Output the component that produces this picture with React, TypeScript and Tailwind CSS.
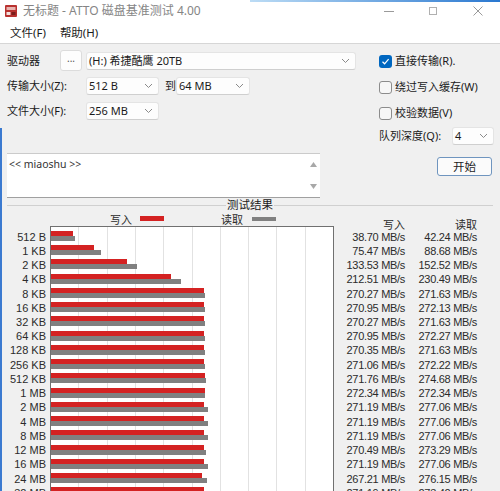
import React from 'react';

const rows = [
  { label: '512 B', write: 38.7, read: 42.24 },
  { label: '1 KB', write: 75.47, read: 88.68 },
  { label: '2 KB', write: 133.53, read: 152.52 },
  { label: '4 KB', write: 212.51, read: 230.49 },
  { label: '8 KB', write: 270.27, read: 271.63 },
  { label: '16 KB', write: 270.95, read: 272.13 },
  { label: '32 KB', write: 270.27, read: 271.63 },
  { label: '64 KB', write: 270.95, read: 272.27 },
  { label: '128 KB', write: 270.35, read: 271.63 },
  { label: '256 KB', write: 271.06, read: 272.22 },
  { label: '512 KB', write: 271.76, read: 274.68 },
  { label: '1 MB', write: 272.34, read: 272.34 },
  { label: '2 MB', write: 271.19, read: 277.06 },
  { label: '4 MB', write: 271.19, read: 277.06 },
  { label: '8 MB', write: 271.19, read: 277.06 },
  { label: '12 MB', write: 270.49, read: 273.29 },
  { label: '16 MB', write: 271.19, read: 277.06 },
  { label: '24 MB', write: 267.21, read: 276.15 },
  { label: '32 MB', write: 271.19, read: 273.42 },
  { label: '64 MB', write: 271.19, read: 277.06 },
];

// chart is 283px wide for 500 MB/s
const SCALE = 283 / 500;

function Chevron() {
  return (
    <svg width="9" height="6" viewBox="0 0 9 6" className="shrink-0">
      <path d="M1 1 L4.5 4.5 L8 1" fill="none" stroke="#8a8a8a" strokeWidth="1" />
    </svg>
  );
}

function Combo({ text, className }: { text: string; className: string }) {
  return (
    <div
      className={`flex h-[18px] items-center justify-between rounded-[3px] border border-[#e4e4e4] border-b-[#cfcfcf] bg-[#fdfdfd] pl-[2px] pr-[5px] text-[11px] leading-[14px] text-[#1b1b1b] ${className}`}
    >
      <span>{text}</span>
      <Chevron />
    </div>
  );
}

function CheckRow({ label, checked }: { label: string; checked?: boolean }) {
  return (
    <div className="flex h-[26px] items-center gap-[3px]">
      {checked ? (
        <div className="flex h-[13px] w-[13px] items-center justify-center rounded-[3px] bg-[#0067c0]">
          <svg width="9" height="9" viewBox="0 0 9 9">
            <path d="M1.5 4.8 L3.6 6.8 L7.6 2.2" fill="none" stroke="#fff" strokeWidth="1.2" />
          </svg>
        </div>
      ) : (
        <div className="h-[13px] w-[13px] rounded-[3px] border border-[#8c8c8c] bg-[#f7f7f7]" />
      )}
      <span className="text-[11px] leading-[14px] text-[#1b1b1b]">{label}</span>
    </div>
  );
}

export default function App() {
  return (
    <div className="relative h-[491px] w-[500px] overflow-hidden bg-[#f0f0f0] font-['Noto_Sans','Noto_Sans_CJK_SC',sans-serif]">
      {/* window behind, peeking through */}
      <div className="absolute right-0 top-0 h-[2px] w-[250px] bg-[linear-gradient(90deg,#bcdcf5,#2a78d0)]" />
      <div className="absolute bottom-0 left-0 top-[128px] w-[2px] bg-[#3b7ad0]" />

      {/* title bar */}
      <div className="flex h-[22px] items-center bg-white">
        <svg width="12" height="12" viewBox="0 0 12 12" className="ml-[5px]">
          <rect x="0" y="0" width="12" height="12" rx="1" fill="#b8312f" />
          <rect x="1.5" y="2" width="9" height="3" fill="#e8b4b0" />
          <rect x="1.5" y="7" width="4" height="3" fill="#f4e2df" />
          <rect x="6.5" y="7" width="4" height="3" fill="#7a1d1b" />
        </svg>
        <span className="ml-[6px] text-[12px] leading-[14px] text-[#858585]">无标题 - ATTO 磁盘基准测试 4.00</span>
        <div className="ml-auto flex items-center">
          <svg width="10" height="10" viewBox="0 0 10 10" className="mr-[35px]">
            <path d="M0 5.5 H10" stroke="#9a9a9a" strokeWidth="1" />
          </svg>
          <svg width="8" height="8" viewBox="0 0 8 8" className="mr-[36px]">
            <rect x="0.5" y="0.5" width="7" height="7" fill="none" stroke="#b0b0b0" strokeWidth="1" />
          </svg>
          <svg width="10" height="10" viewBox="0 0 10 10" className="mr-[17px]">
            <path d="M0.5 0.5 L9.5 9.5 M9.5 0.5 L0.5 9.5" stroke="#9a9a9a" strokeWidth="1" />
          </svg>
        </div>
      </div>

      {/* menu */}
      <div className="flex h-[22px] items-center gap-[14px] border-b border-[#d6d6d6] bg-white pl-[10px] text-[11.5px] leading-[14px] text-[#1b1b1b]">
        <span>文件(F)</span>
        <span>帮助(H)</span>
      </div>

      {/* settings */}
      <div className="flex pl-[7px] pt-[4px]">
        <div className="w-[372px]">
          <div className="flex h-[25px] items-center">
            <span className="w-[53px] text-[11px] leading-[14px] text-[#1b1b1b]">驱动器</span>
            <div className="flex h-[21px] w-[22px] items-start justify-center rounded-[3px] border border-[#dcdcdc] bg-[#fdfdfd] text-[10px] leading-[14px] text-[#555]">
              ...
            </div>
            <Combo text="(H:) 希捷酷鹰 20TB" className="ml-[4px] w-[270px]" />
          </div>
          <div className="flex h-[25px] items-center">
            <span className="w-[79px] text-[11px] leading-[14px] text-[#1b1b1b]">传输大小(Z):</span>
            <Combo text="512 B" className="w-[73px]" />
            <span className="ml-[6px] w-[11px] text-[11px] leading-[14px] text-[#1b1b1b]">到</span>
            <Combo text="64 MB" className="w-[74px]" />
          </div>
          <div className="flex h-[25px] items-center">
            <span className="w-[79px] text-[11px] leading-[14px] text-[#1b1b1b]">文件大小(F):</span>
            <Combo text="256 MB" className="w-[73px]" />
          </div>

          <div className="mt-[30px] flex h-[45px] w-[313px] border-b border-t border-b-[#a0a0a0] border-t-[#cbcbcb] bg-white">
            <span className="flex-1 pl-[2px] pt-[3px] text-[10.5px] leading-[14px] text-[#333]">&lt;&lt; miaoshu &gt;&gt;</span>
            <div className="flex w-[14px] flex-col items-center justify-between py-[8px]">
              <svg width="7" height="5" viewBox="0 0 7 5">
                <path d="M0 5 L3.5 0 L7 5 Z" fill="#a8a8a8" />
              </svg>
              <svg width="7" height="5" viewBox="0 0 7 5">
                <path d="M0 0 L3.5 5 L7 0 Z" fill="#a8a8a8" />
              </svg>
            </div>
          </div>
        </div>

        <div className="w-[115px]">
          <CheckRow label="直接传输(R)." checked />
          <CheckRow label="绕过写入缓存(W)" />
          <CheckRow label="校验数据(V)" />
          <div className="flex h-[20px] items-center">
            <span className="w-[73px] text-[11px] leading-[14px] text-[#1b1b1b]">队列深度(Q):</span>
            <Combo text="4" className="w-[42px]" />
          </div>
          <div className="ml-[58px] mt-[11px] flex h-[19px] w-[55px] items-center justify-center rounded-[3px] border border-[#6f95bf] bg-[#fbfbfb] text-[11.5px] leading-[14px] text-[#1b1b1b]">
            开始
          </div>
        </div>
      </div>

      {/* results group */}
      <div className="ml-[7px] mt-[1px] flex h-[12px] w-[486px] items-center">
        <div className="h-px flex-1 bg-[#d0d0d0]" />
        <span className="px-[1px] text-[11.5px] leading-[12px] text-[#1b1b1b]">测试结果</span>
        <div className="h-px flex-1 bg-[#d0d0d0]" />
      </div>

      <div className="flex font-['Liberation_Sans','Noto_Sans_CJK_SC',sans-serif] text-[#2b2b2b]">
        <div className="w-[334px]">
          <div className="flex h-[15px] items-center">
            <span className="ml-[110px] font-['Noto_Sans_CJK_SC',sans-serif] text-[11px] leading-[12px]">写入</span>
            <div className="ml-[8px] h-[5px] w-[24px] bg-[#d42222]" />
            <span className="ml-[57px] font-['Noto_Sans_CJK_SC',sans-serif] text-[11px] leading-[12px]">读取</span>
            <div className="ml-[9px] h-[4px] w-[24px] bg-[#808080]" />
          </div>
          <div className="flex">
            <div className="w-[50px] pr-[4px] pt-[3.5px]">
              {rows.map((r) => (
                <div key={r.label} className="flex h-[14.24px] items-center justify-end text-[11px] leading-[12px]">
                  {r.label}
                </div>
              ))}
            </div>
            <div className="relative h-[280px] w-[284px] border-l border-r border-t border-[#707070] bg-white pt-[2.5px]">
              {Array.from({ length: 9 }).map((_, i) => (
                <div
                  key={i}
                  className="absolute bottom-0 top-0 w-px bg-[#e2e2e2]"
                  style={{ left: Math.round((i + 1) * 28.3) - 1 }}
                />
              ))}
              {rows.map((r) => (
                <div key={r.label} className="relative h-[14.24px] pt-[1.5px]">
                  <div className="h-[5px] bg-[#d42222]" style={{ width: r.write * SCALE }} />
                  <div className="h-[5px] bg-[#808080]" style={{ width: r.read * SCALE }} />
                </div>
              ))}
            </div>
          </div>
        </div>

        <div className="w-[159px]">
          <div className="flex h-[18.5px] items-end font-['Noto_Sans_CJK_SC',sans-serif] text-[11px] leading-[12px]">
            <span className="w-[71px] text-right">写入</span>
            <span className="w-[72px] text-right">读取</span>
          </div>
          {rows.map((r) => (
            <div key={r.label} className="flex h-[14.24px] items-center text-[11px] leading-[12px] tracking-[-0.3px]">
              <span className="w-[71px] text-right">{r.write.toFixed(2)} MB/s</span>
              <span className="w-[72px] text-right">{r.read.toFixed(2)} MB/s</span>
            </div>
          ))}
        </div>
      </div>
    </div>
  );
}
